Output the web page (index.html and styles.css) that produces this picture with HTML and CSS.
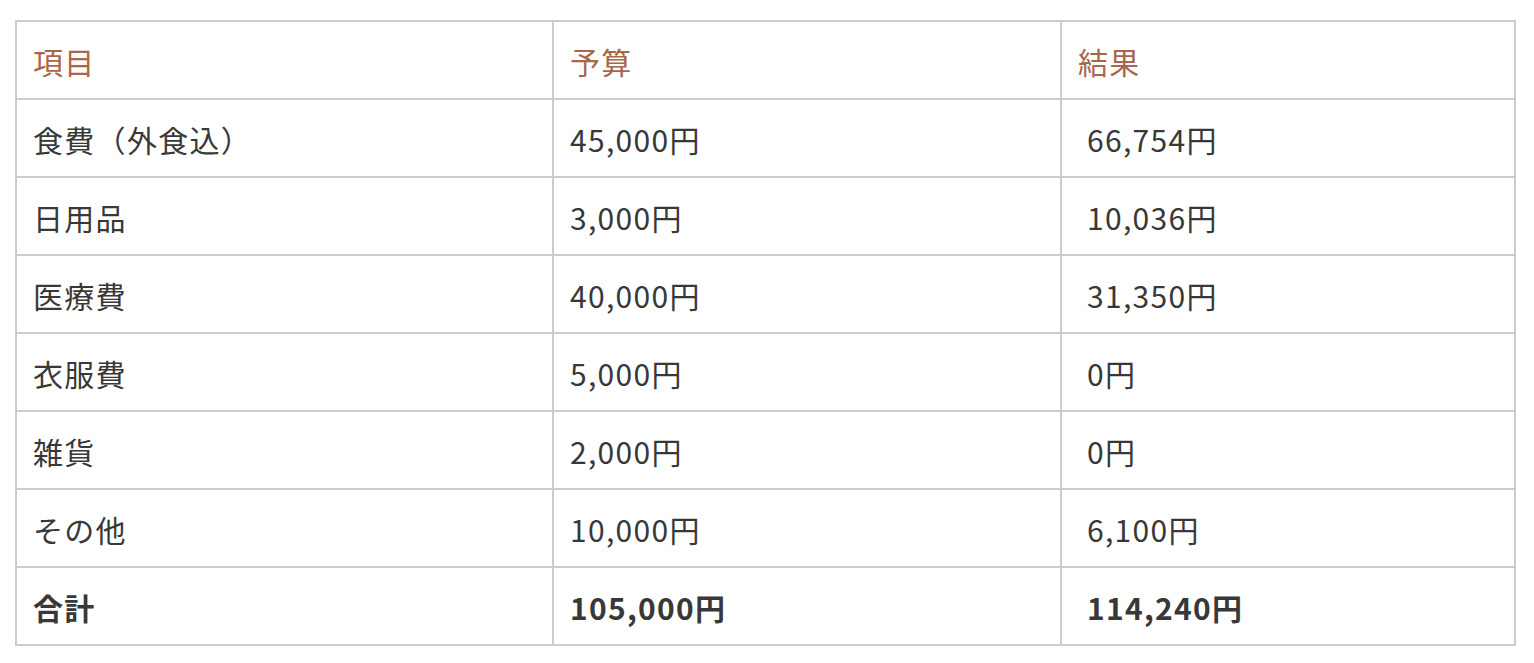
FILE: index.html
```html
<!DOCTYPE html>
<html lang="ja">
<head>
<meta charset="utf-8">
<title>予算と結果</title>
<link rel="stylesheet" href="styles.css">
</head>
<body>
<div class="page">
<table class="budget">
<colgroup>
<col class="c1"><col class="c2"><col class="c3">
</colgroup>
<thead>
<tr><th>項目</th><th>予算</th><th>結果</th></tr>
</thead>
<tbody>
<tr><td>食費（外食込）</td><td>45,000円</td><td class="res">66,754円</td></tr>
<tr><td>日用品</td><td>3,000円</td><td class="res">10,036円</td></tr>
<tr><td>医療費</td><td>40,000円</td><td class="res">31,350円</td></tr>
<tr><td>衣服費</td><td>5,000円</td><td class="res">0円</td></tr>
<tr><td>雑貨</td><td>2,000円</td><td class="res">0円</td></tr>
<tr><td>その他</td><td>10,000円</td><td class="res">6,100円</td></tr>
<tr class="total"><td>合計</td><td>105,000円</td><td class="res">114,240円</td></tr>
</tbody>
</table>
</div>
</body>
</html>
```
FILE: styles.css
```css
html, body {
  margin: 0;
  padding: 0;
  background: #fff;
}
.page {
  padding: 20px 0 0 15px;
}
.budget {
  border-collapse: collapse;
  width: 1499px;
  table-layout: fixed;
  font-family: "Noto Sans CJK JP", "Noto Sans", sans-serif;
  font-size: 30px;
  letter-spacing: 1.3px;
  color: #383838;
}
.c1 { width: 537px; }
.c2 { width: 508px; }
.c3 { width: 454px; }
.budget th,
.budget td {
  border: 2px solid #cccccc;
  height: 76px;
  box-sizing: border-box;
  padding: 2px 16px 0;
  text-align: left;
  vertical-align: middle;
  line-height: 1.2;
}
.budget tr { height: 78px; }
.budget th {
  font-weight: normal;
  color: #a8674a;
}
.budget td.res {
  padding-left: 25px;
}
.total td {
  font-weight: bold;
}
```
